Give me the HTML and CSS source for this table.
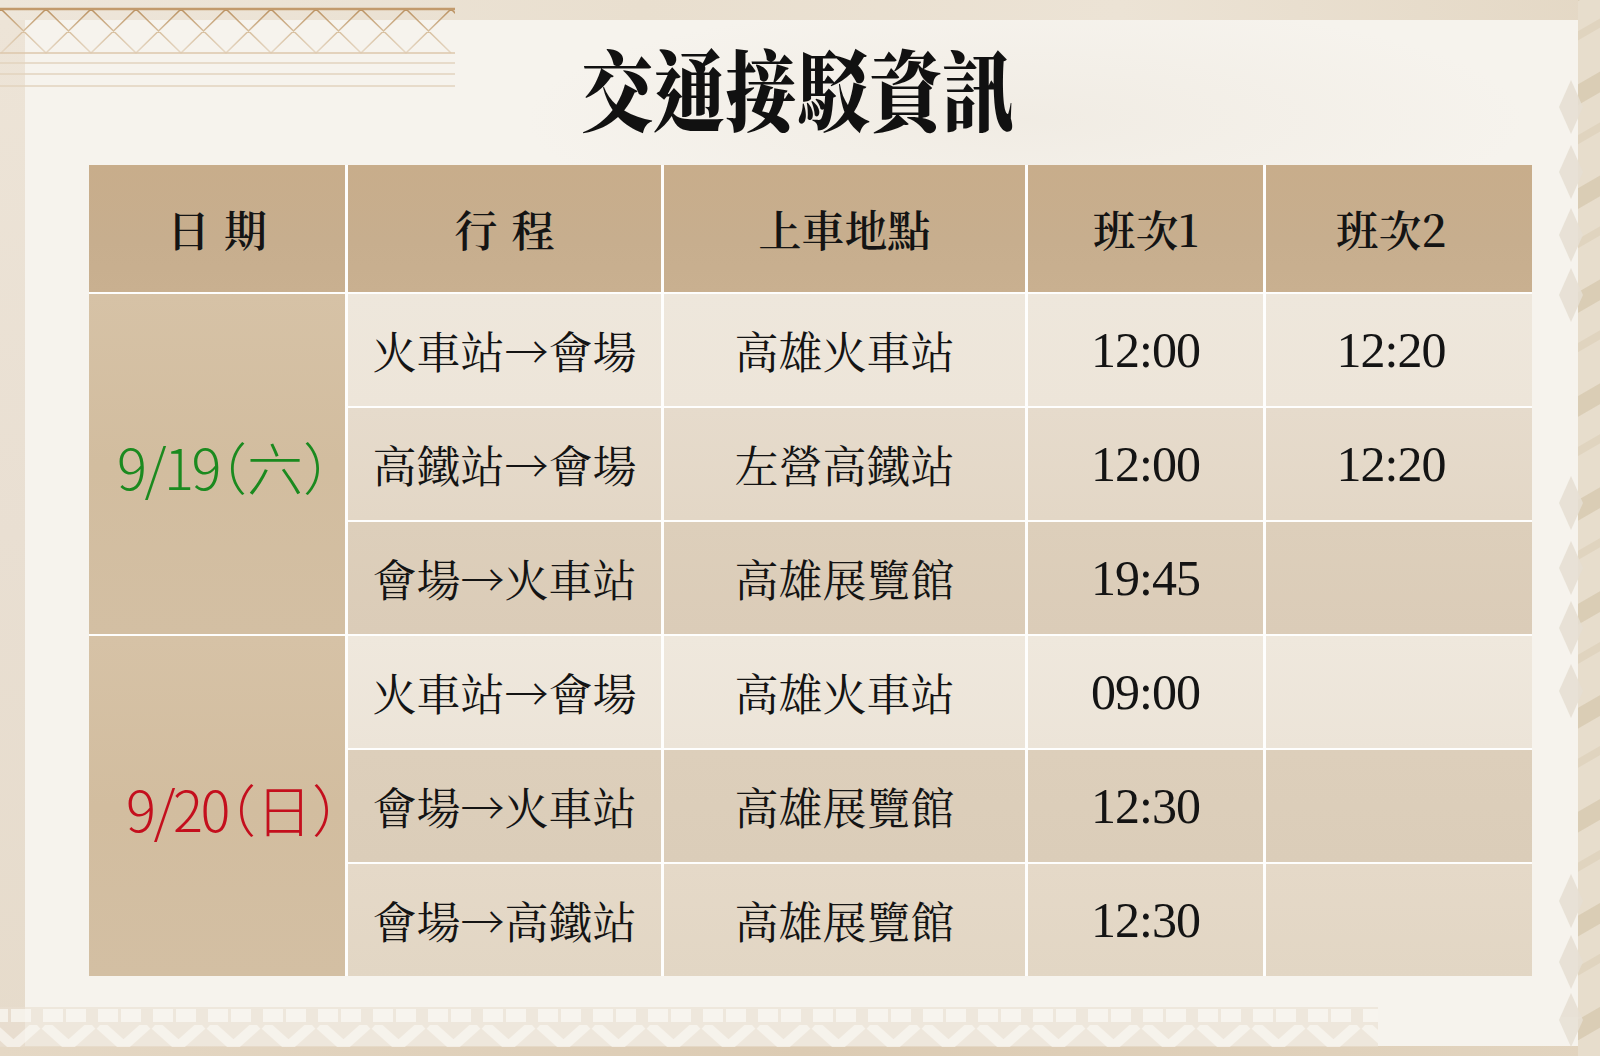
FILE: index.html
```html
<!DOCTYPE html>
<html lang="zh-Hant">
<head>
<meta charset="utf-8">
<title>交通接駁資訊</title>
<link rel="stylesheet" href="styles.css">
</head>
<body>
<div class="page">
  <div class="strip-top"></div>
  <div class="strip-left"></div>
  <main class="panel">
    <h1 class="title">交通接駁資訊</h1>
    <div class="table">
      <div class="cell head">日期</div>
      <div class="cell head">行程</div>
      <div class="cell head tight">上車地點</div>
      <div class="cell head tight">班次1</div>
      <div class="cell head tight last">班次2</div>

      <div class="cell date green span3"><span class="num">9/19</span><span class="cjk">（六）</span></div>
      <div class="cell r1 route">火車站→會場</div>
      <div class="cell r1 route">高雄火車站</div>
      <div class="cell r1 time">12:00</div>
      <div class="cell r1 time last">12:20</div>

      <div class="cell r2 route">高鐵站→會場</div>
      <div class="cell r2 route">左營高鐵站</div>
      <div class="cell r2 time">12:00</div>
      <div class="cell r2 time last">12:20</div>

      <div class="cell r3 route">會場→火車站</div>
      <div class="cell r3 route">高雄展覽館</div>
      <div class="cell r3 time">19:45</div>
      <div class="cell r3 time last"></div>

      <div class="cell date red span3"><span class="num">9/20</span><span class="cjk">（日）</span></div>
      <div class="cell r4 route">火車站→會場</div>
      <div class="cell r4 route">高雄火車站</div>
      <div class="cell r4 time">09:00</div>
      <div class="cell r4 time last"></div>

      <div class="cell r5 route">會場→火車站</div>
      <div class="cell r5 route">高雄展覽館</div>
      <div class="cell r5 time">12:30</div>
      <div class="cell r5 time last"></div>

      <div class="cell r6 route">會場→高鐵站</div>
      <div class="cell r6 route">高雄展覽館</div>
      <div class="cell r6 time">12:30</div>
      <div class="cell r6 time last"></div>
    </div>
  </main>
  <div class="strip-right"></div>
  <div class="strip-bottom"></div>

  <svg class="deco-zigzag" width="456" height="92" viewBox="0 0 456 92">
    <defs>
      <linearGradient id="zg" gradientUnits="userSpaceOnUse" x1="0" y1="9" x2="0" y2="53">
        <stop offset="0" stop-color="#b98f5e"/>
        <stop offset="0.5" stop-color="#d7bf9f"/>
        <stop offset="1" stop-color="#e6d8c5"/>
      </linearGradient>
      <clipPath id="zc"><rect x="0" y="0" width="455" height="92"/></clipPath>
    </defs>
    <g clip-path="url(#zc)" fill="none" stroke-width="1.6">
      <path stroke="url(#zg)" d="M1 9 L46 53 M1 9 L-44 53 M46 9 L91 53 M46 9 L1 53 M91 9 L136 53 M91 9 L46 53 M136 9 L181 53 M136 9 L91 53 M181 9 L226 53 M181 9 L136 53 M226 9 L271 53 M226 9 L181 53 M271 9 L316 53 M271 9 L226 53 M316 9 L361 53 M316 9 L271 53 M361 9 L406 53 M361 9 L316 53 M406 9 L451 53 M406 9 L361 53 M451 9 L496 53 M451 9 L406 53"/>
      <path stroke="#c29a6c" stroke-width="2.4" d="M0 9 H455"/>
      <path stroke="#dcc7ab" d="M0 53 H455"/>
      <path stroke="#e2d3bf" d="M0 63 H455 M0 74 H455 M0 86 H455"/>
    </g>
  </svg>

  <svg class="deco-band" width="1378" height="40" viewBox="0 0 1378 40">
    <defs>
      <pattern id="sq" width="55" height="16" patternUnits="userSpaceOnUse" x="-14">
        <rect x="2" y="2" width="20" height="13" fill="#f8f5ef"/>
        <rect x="25" y="2" width="20" height="13" fill="#f8f5ef"/>
      </pattern>
      <pattern id="vv" width="55" height="22" patternUnits="userSpaceOnUse" x="-14" y="18">
        <polyline points="4,0 27.5,21 51,0" fill="none" stroke="#f7f3ec" stroke-width="10"/>
      </pattern>
    </defs>
    <rect x="0" y="0" width="1378" height="40" fill="#e9e0d2" opacity="0.7"/>
    <rect x="0" y="0" width="1378" height="17" fill="url(#sq)"/>
    <rect x="0" y="18" width="1378" height="22" fill="url(#vv)"/>
  </svg>

  <svg class="deco-right" width="56" height="1056" viewBox="0 0 56 1056">
    <defs>
      <pattern id="stripes" width="60" height="90" patternUnits="userSpaceOnUse" patternTransform="rotate(-30)">
        <rect width="60" height="90" fill="#e7ddcc"/>
        <rect y="0" width="60" height="18" fill="#dacdb5"/>
        <rect y="44" width="60" height="8" fill="#e0d4bf"/>
      </pattern>
    </defs>
    <rect x="34" y="0" width="22" height="1056" fill="url(#stripes)"/>
    <g fill="#e6dfd3" opacity="0.85">
      <path d="M27 80 L39 107 L27 134 L15 107 Z"/>
      <path d="M27 145 L39 172 L27 199 L15 172 Z"/>
      <path d="M27 208 L39 235 L27 262 L15 235 Z"/>
      <path d="M27 268 L39 295 L27 322 L15 295 Z"/>
      <path d="M27 476 L39 503 L27 530 L15 503 Z"/>
      <path d="M27 541 L39 568 L27 595 L15 568 Z"/>
      <path d="M27 601 L39 628 L27 655 L15 628 Z"/>
      <path d="M27 664 L39 691 L27 718 L15 691 Z"/>
      <path d="M27 874 L39 901 L27 928 L15 901 Z"/>
      <path d="M27 935 L39 962 L27 989 L15 962 Z"/>
      <path d="M27 993 L39 1020 L27 1047 L15 1020 Z"/>
    </g>
  </svg>
</div>
</body>
</html>
```

FILE: styles.css
```css
html, body {
  margin: 0;
  padding: 0;
}

body {
  width: 1600px;
  height: 1056px;
  overflow: hidden;
  background: #ebe2d4;
  font-family: "Noto Serif CJK TC", "Noto Sans CJK TC", serif;
}

.page {
  position: relative;
  width: 1600px;
  height: 1056px;
  display: grid;
  grid-template-columns: 25px 1553px 22px;
  grid-template-rows: 20px 1026px 10px;
  background: linear-gradient(180deg, #ebdfcd 0, #e6d9c5 100%);
}

.strip-top {
  grid-column: 1 / 4;
  grid-row: 1;
  background: linear-gradient(90deg, #eee6da, #e9dfcf 40%, #ece3d5 70%, #e4d8c5);
}

.strip-left {
  grid-column: 1;
  grid-row: 2;
  background: linear-gradient(180deg, #ede4d7, #e9dfd2 50%, #e6dbcb);
}

.strip-right {
  grid-column: 3;
  grid-row: 2;
}

.strip-bottom {
  grid-column: 1 / 4;
  grid-row: 3;
  background: linear-gradient(90deg, #e5d8c5, #dccbb3 50%, #e2d4bf);
}

.panel {
  grid-column: 2;
  grid-row: 2;
  background:
    radial-gradient(ellipse 500px 120px at 1000px 100px, rgba(225, 215, 200, 0.25), transparent),
    #f6f3ed;
  display: flex;
  flex-direction: column;
}

.title {
  margin: 21px 0 34px 0;
  padding-right: 10px;
  height: 90px;
  line-height: 90px;
  font-family: "Noto Serif CJK TC", "Noto Sans CJK TC", serif;
  font-weight: 900;
  font-size: 88px;
  color: #111;
  text-align: center;
  transform: scaleX(0.82);
  letter-spacing: 0;
}

.table {
  margin-left: 64px;
  width: 1443px;
  display: grid;
  grid-template-columns: 256px 313px 361px 235px 266px;
  grid-template-rows: 127px repeat(6, 112px);
  column-gap: 3px;
  row-gap: 2px;
  background: rgba(255, 255, 255, 0.85);
}

.cell {
  display: flex;
  align-items: center;
  justify-content: center;
  color: #141414;
  font-size: 44px;
  white-space: nowrap;
}

.head {
  background: linear-gradient(180deg, #c8ad8b, #c7ae8e 60%, #c9b090);
  font-weight: 600;
  letter-spacing: 14px;
  padding-left: 14px;
  font-size: 43px;
}

.head.tight {
  letter-spacing: 0;
  padding-left: 0;
}

.last {
  padding-right: 16px;
}

.date {
  background: linear-gradient(180deg, #d6c2a6, #d2bd9f 50%, #d3bfa3);
  font-family: "Noto Sans CJK TC", sans-serif;
  font-weight: 300;
  font-size: 56px;
}

.span3 {
  grid-row: span 3;
}

.date.green {
  color: #1b8a1f;
  padding-top: 2px;
  padding-left: 14px;
}

.date.red {
  color: #c40f1d;
  padding-left: 32px;
  padding-top: 2px;
}

.date .num {
  letter-spacing: -2.5px;
}

.date .cjk {
  letter-spacing: 0;
  font-feature-settings: "halt";
}

.route {
  font-family: "Noto Serif CJK TC", "Noto Sans CJK TC", serif;
  font-weight: 400;
}

.time {
  font-family: "Liberation Serif", serif;
  font-size: 50px;
  letter-spacing: -1px;
}

.r1 { background: linear-gradient(180deg, #eee7dc, #ede5d9); }
.r2 { background: linear-gradient(180deg, #e6dbcc, #e3d7c6); }
.r3 { background: linear-gradient(180deg, #ddcfbb, #dbccb8); }
.r4 { background: linear-gradient(180deg, #efe8dd, #ece4d8); }
.r5 { background: linear-gradient(180deg, #ddcfbb, #dbcdb9); }
.r6 { background: linear-gradient(180deg, #e5d9c8, #e2d6c4); }

.deco-zigzag {
  position: absolute;
  left: 0;
  top: 0;
}

.deco-band {
  position: absolute;
  left: 0;
  top: 1007px;
  opacity: 0.85;
}

.deco-right {
  position: absolute;
  right: 0;
  top: 0;
}
```
